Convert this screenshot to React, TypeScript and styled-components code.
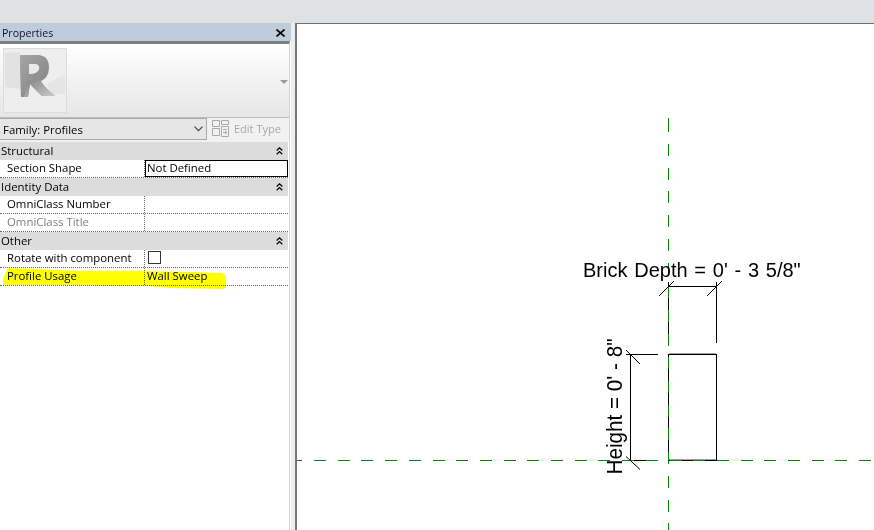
import React from "react";
import styled, { createGlobalStyle } from "styled-components";

const GlobalStyle = createGlobalStyle`
  html, body {
    margin: 0;
    padding: 0;
    background: #ffffff;
    overflow: hidden;
  }
`;

const DASH = "#008a00";

const CollapseIcon = () => (
  <svg width="7" height="8" viewBox="0 0 7 8" fill="none" stroke="#000" strokeWidth="1.2">
    <path d="M0.7 3.5 L3.5 0.8 L6.3 3.5" />
    <path d="M0.7 7.3 L3.5 4.6 L6.3 7.3" />
  </svg>
);

const RevitLogo = () => (
  <svg width="64" height="65" viewBox="0 0 64 65">
    <defs>
      <linearGradient id="rFace" x1="0" y1="0" x2="1" y2="1">
        <stop offset="0" stopColor="#a6a6a6" />
        <stop offset="1" stopColor="#7c7c7c" />
      </linearGradient>
      <linearGradient id="rLeg" x1="0" y1="0" x2="1" y2="1">
        <stop offset="0" stopColor="#7e7e7e" />
        <stop offset="1" stopColor="#cdcdcd" />
      </linearGradient>
    </defs>
    <path d="M2 5 L17 4 L17 41 L2 39 Z" fill="#e2e2e2" />
    <path d="M44 36 L62 26 L62 46 L48 46 Z" fill="#e5e5e5" />
    <path d="M17 7 L36 7 Q46 8 46 20 Q46 30 36 34 L52 48 L39 48 L27 36 L25 49 L18 49 Q17 30 17 7 Z" fill="url(#rFace)" />
    <path d="M26 16 L33 16 Q37 17 36 21 Q35 26 26 26 Z" fill="#e9e9e9" />
    <path d="M25 33 Q32 33 36 30 Q42 40 52 48 L39 48 Q32 42 27 36 L25 49 L21 49 Z" fill="url(#rLeg)" />
  </svg>
);

const EditTypeIcon = () => (
  <svg width="18" height="17" viewBox="0 0 18 17" fill="none" stroke="#a9a9a9" strokeWidth="1">
    <path d="M0.5 0.5 H7.5 V6.5 H0.5 Z" />
    <path d="M9.5 0.5 H16.5 V4.5 H9.5 Z" />
    <path d="M0.5 8.5 H7.5 V15.5 H0.5 Z" />
    <path d="M9.5 6.5 H16.5 V16.5 H9.5 Z" />
    <path d="M11 9.5 H15 M11 12.5 H14 M13 11 L15 12.5 L13 14" />
  </svg>
);

type PropertyRow = { label: string; value?: string; muted?: boolean; active?: boolean; checkbox?: boolean };
type PropertyGroup = { title: string; rows: PropertyRow[] };

const groups: PropertyGroup[] = [
  { title: "Structural", rows: [{ label: "Section Shape", value: "Not Defined", active: true }] },
  {
    title: "Identity Data",
    rows: [{ label: "OmniClass Number" }, { label: "OmniClass Title", muted: true }],
  },
  {
    title: "Other",
    rows: [{ label: "Rotate with component", checkbox: true }, { label: "Profile Usage", value: "Wall Sweep" }],
  },
];

const Drawing = () => (
  <CanvasSvg viewBox="297 24 577 506">
    <g stroke="#000" strokeWidth="1" fill="none" shapeRendering="crispEdges">
      <path d="M668.5 282 V343 M716.5 282 V343 M668 286.5 H717" />
      <path d="M630.5 354 V461 M626 354.5 H658 M626 460.5 H658" />
      <path d="M668.5 354.5 H716.5 V460.5 H668.5 Z" />
      <path d="M669 353.5 H716" stroke="#a0a0a0" />
      <path d="M669 459.5 H716" stroke="#a0a0a0" />
    </g>
    <g stroke={DASH} strokeWidth="1" strokeDasharray="12 11.7" shapeRendering="crispEdges">
      <path d="M668.5 118 V132" strokeDasharray="none" />
      <path d="M668.5 144 V530" />
      <path d="M297 460.5 H874" strokeDashoffset="6.7" />
    </g>
    <g stroke="#000" strokeWidth="1" fill="none">
      <path d="M659 296 L674 281 M707 296 L722 281" />
      <path d="M626 350 L640 364 M626 456.5 L640 469.5" />
    </g>
    <DimensionText $size={20} $wordGap={1.2} x="583" y="277">
      Brick Depth = 0' - 3 5/8"
    </DimensionText>
    <DimensionText $size={22} transform="translate(621.7 474.5) rotate(-90) scale(0.94 1)">
      Height = 0' - 8"
    </DimensionText>
  </CanvasSvg>
);

export default function App() {
  return (
    <Page>
      <GlobalStyle />
      <TopBar />
      <Workspace>
        <Panel>
          <PanelHeader>
            <span>Properties</span>
            <svg width="9" height="8" viewBox="0 0 9 8" stroke="#000" strokeWidth="1.6">
              <path d="M0.5 0.5 L8.5 7.5 M8.5 0.5 L0.5 7.5" />
            </svg>
          </PanelHeader>
          <PanelBody>
            <Preview>
              <Thumbnail>
                <RevitLogo />
              </Thumbnail>
              <PreviewArrow />
            </Preview>
            <TypeBar>
              <TypeSelect>
                <span>Family: Profiles</span>
                <svg width="9" height="6" viewBox="0 0 9 6" fill="none" stroke="#444" strokeWidth="1.2">
                  <path d="M0.5 0.7 L4.5 4.7 L8.5 0.7" />
                </svg>
              </TypeSelect>
              <EditType>
                <EditTypeIcon />
                <span>Edit Type</span>
              </EditType>
            </TypeBar>
            <Table>
              {groups.map((group) => (
                <React.Fragment key={group.title}>
                  <GroupHeader>
                    <span>{group.title}</span>
                    <CollapseIcon />
                  </GroupHeader>
                  {group.rows.map((row) => (
                    <Row key={row.label}>
                      <LabelCell $muted={row.muted}>{row.label}</LabelCell>
                      <ValueCell $active={row.active}>
                        {row.checkbox ? <Checkbox /> : row.value}
                      </ValueCell>
                    </Row>
                  ))}
                </React.Fragment>
              ))}
              <Highlight viewBox="0 0 230 24">
                <path
                  d="M8 0 L80 3 L140 3 L190 4 L222 5 L226 8 L226 20 L222 21 L170 20 L147 18 L60 17 L3 17 L3 11 Z"
                  fill="#ffff00"
                />
              </Highlight>
            </Table>
          </PanelBody>
        </Panel>
        <Gutter />
        <Canvas>
          <Drawing />
        </Canvas>
      </Workspace>
    </Page>
  );
}

const Page = styled.div`
  width: 874px;
  height: 530px;
  display: flex;
  flex-direction: column;
  overflow: hidden;
  background: #ffffff;
  font-family: "Open Sans", "Noto Sans", sans-serif;
  font-size: 11.4px;
  color: #000000;
`;

const TopBar = styled.div`
  height: 23px;
  flex: none;
  background: #e0e1e3;
`;

const Workspace = styled.div`
  flex: 1;
  display: flex;
  min-height: 0;
`;

const Panel = styled.div`
  width: 291px;
  flex: none;
  display: flex;
  flex-direction: column;
  background: #ffffff;
`;

const PanelHeader = styled.div`
  height: 18px;
  flex: none;
  box-sizing: border-box;
  display: flex;
  align-items: center;
  justify-content: space-between;
  padding: 1px 6px 0 2px;
  background: #bfcddb;
  color: #14102c;
  font-size: 10.6px;
`;

const PanelBody = styled.div`
  flex: 1;
  width: 290px;
  box-sizing: border-box;
  border-top: 3px solid #7f7f7f;
  border-right: 1px solid #d4d4d4;
  background: #ffffff;
`;

const Preview = styled.div`
  height: 74px;
  box-sizing: border-box;
  padding: 4px 1px 0 3px;
  display: flex;
  justify-content: space-between;
  align-items: flex-start;
  border-bottom: 1px solid #bdbdbd;
  background: linear-gradient(#ffffff, #e6e6e6);
`;

const Thumbnail = styled.div`
  width: 64px;
  height: 65px;
  box-sizing: border-box;
  border: 1px solid #dcdcdc;
  background: #eeeeee;
  line-height: 0;
  svg {
    margin: -1px;
  }
`;

const PreviewArrow = styled.div`
  margin-top: 32px;
  width: 0;
  height: 0;
  border-left: 4px solid transparent;
  border-right: 4px solid transparent;
  border-top: 4px solid #9a9a9a;
`;

const TypeBar = styled.div`
  height: 24px;
  display: flex;
  align-items: flex-start;
  background: #f1f1f1;
`;

const TypeSelect = styled.div`
  width: 207px;
  height: 22px;
  box-sizing: border-box;
  display: flex;
  align-items: center;
  justify-content: space-between;
  padding: 0 3px 0 3px;
  border: 1px solid #a9a9a9;
  border-left: 0;
  background: #e6e6e6;
`;

const EditType = styled.div`
  display: flex;
  align-items: center;
  gap: 4px;
  padding: 2px 0 0 5px;
  color: #a8a8a8;
  font-size: 11px;
`;

const Table = styled.div`
  position: relative;
  width: 288px;
`;

const GroupHeader = styled.div`
  height: 17.94px;
  box-sizing: border-box;
  display: flex;
  align-items: center;
  justify-content: space-between;
  padding: 0 5px 0 1px;
  background: #dcdcdc;
`;

const Row = styled.div`
  height: 17.94px;
  display: grid;
  grid-template-columns: 145px 1fr;
  box-sizing: border-box;
  border-bottom: 1px dotted #666666;
`;

const LabelCell = styled.div<{ $muted?: boolean }>`
  display: flex;
  align-items: center;
  padding: 0 0 1px 7px;
  border-right: 1px dotted #666666;
  color: ${(p) => (p.$muted ? "#808080" : "#000000")};
`;

const ValueCell = styled.div<{ $active?: boolean }>`
  display: flex;
  align-items: center;
  padding: 0 0 1px 2px;
  outline: ${(p) => (p.$active ? "1.5px solid #000000" : "none")};
  outline-offset: -1px;
`;

const Checkbox = styled.div`
  width: 13px;
  height: 13px;
  box-sizing: border-box;
  margin-left: 1px;
  border: 1px solid #333333;
  background: #ffffff;
`;

const Highlight = styled.svg`
  position: absolute;
  left: 0;
  bottom: -6px;
  width: 230px;
  height: 24px;
  mix-blend-mode: multiply;
  pointer-events: none;
`;

const Gutter = styled.div`
  width: 4px;
  flex: none;
  background: #ededed;
  border-right: 2px solid #777777;
`;

const Canvas = styled.div`
  flex: 1;
  min-width: 0;
  border-top: 1px solid #6f6f6f;
  background: #ffffff;
`;

const CanvasSvg = styled.svg`
  display: block;
  width: 100%;
  height: 100%;
`;

const DimensionText = styled.text<{ $size: number; $wordGap?: number }>`
  font-family: "Liberation Sans", Arial, sans-serif;
  font-size: ${(p) => p.$size}px;
  word-spacing: ${(p) => p.$wordGap ?? 0}px;
  fill: #000000;
`;
